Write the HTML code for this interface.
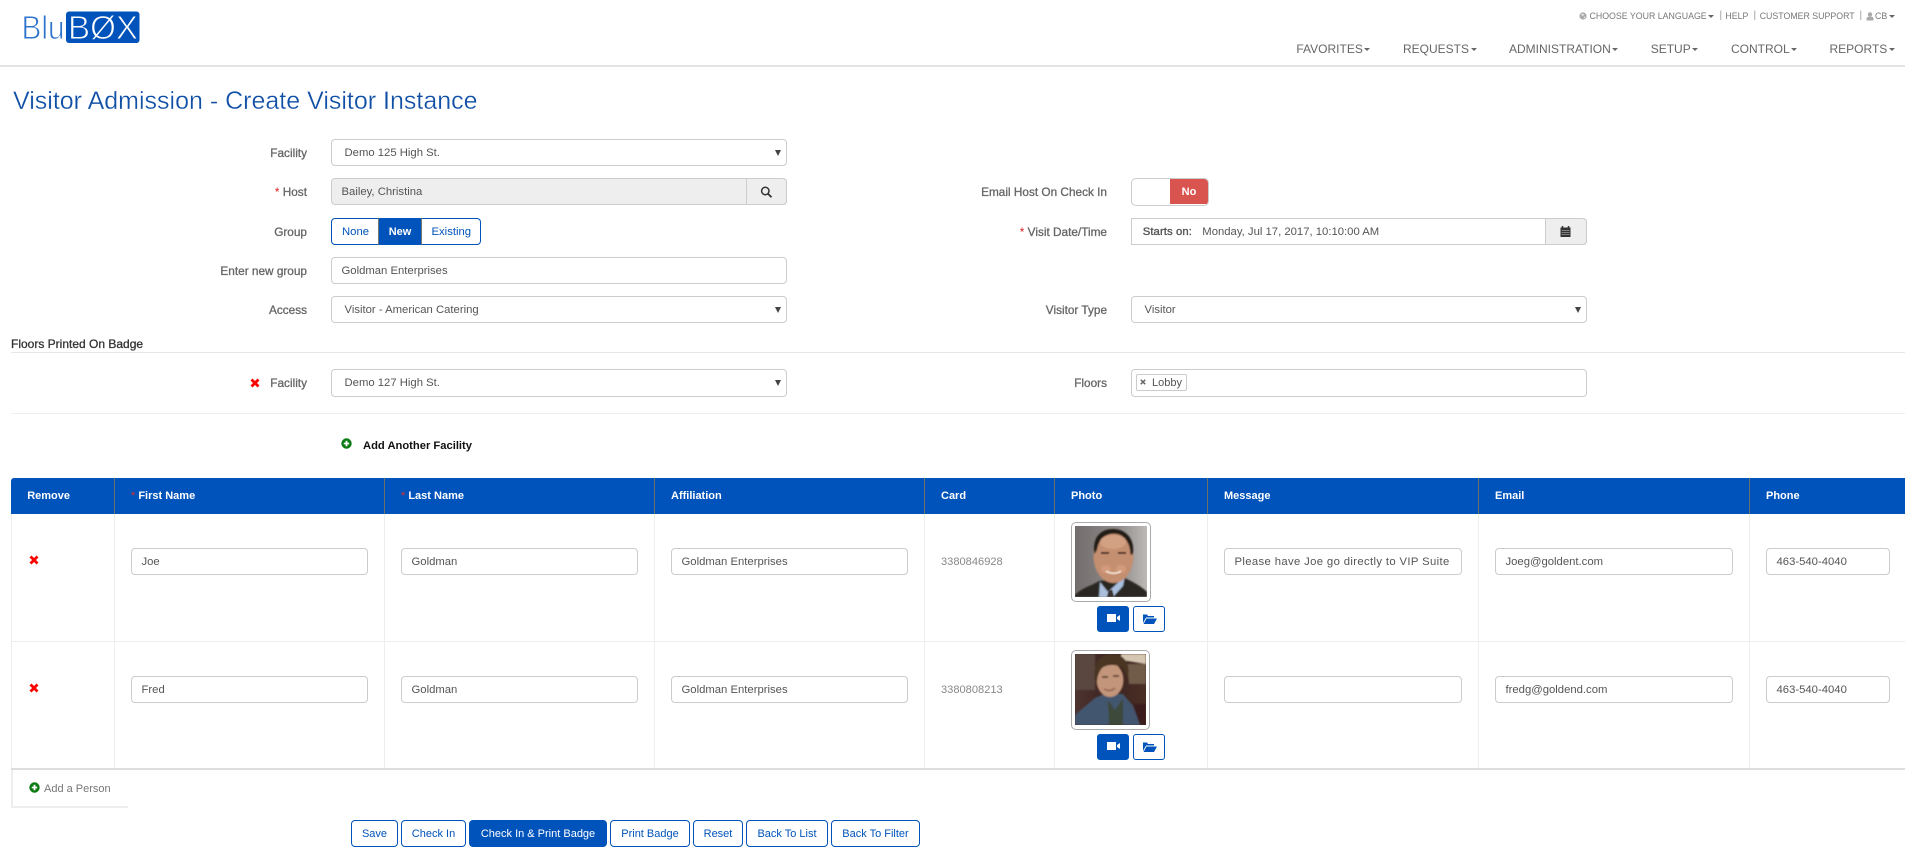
<!DOCTYPE html>
<html lang="en"><head><meta charset="utf-8"><title>Visitor Admission - Create Visitor Instance</title>
<style>
html,body{margin:0;padding:0;background:#fff;width:1905px;height:866px;overflow:hidden}
body{font-family:"Liberation Sans",Arial,sans-serif;font-size:12px;color:#555;position:relative}
.a{position:absolute;white-space:nowrap;box-sizing:border-box}
.lb{text-align:right;color:#666;font-size:11.8px;line-height:20px;-webkit-text-stroke:.3px #666}
.lb i{color:#e02020;font-style:normal;-webkit-text-stroke:0}
.in{border:1.5px solid #ccc;border-radius:4px;background:#fff;font-size:11.3px;line-height:26px;color:#555;padding-left:9.5px}
.sel{padding-left:12.5px}
.sel:after{content:"";position:absolute;right:5.5px;top:10px;border-left:3px solid transparent;border-right:3px solid transparent;border-top:6px solid #444}
.nav{font-size:12px;color:#666;line-height:16px;top:41px}
.nav b,.top b{display:inline-block;width:0;height:0;border-left:3px solid transparent;border-right:3px solid transparent;border-top:3px solid #666;vertical-align:middle;margin-left:1.5px}
.top{font-size:8.8px;color:#777;line-height:12px;top:10px}
.top.s{font-size:10px;color:#999}
.th{top:478px;height:36px;line-height:37px;color:#fff;font-weight:bold;font-size:11px}
.th i{color:#e0302a;font-style:normal;font-weight:normal}
.vh{top:478px;width:1px;height:36px;background:#6b6f6a}
.vb{top:514px;width:1px;height:254px;background:#eee}
.c{font-size:11.1px;color:#888;line-height:16px}
.btn{top:820px;height:27px;border:1px solid #0053ba;border-radius:4px;color:#0053ba;text-align:center;line-height:26px;font-size:11px;background:#fff}
.p{background:#0053ba;color:#fff}
.ib{width:32px;height:26px;border:1px solid #0053ba;border-radius:3px;background:#fff}
.ib.p{background:#0053ba}
.ib svg{position:absolute;left:8px;top:5px}
.ph{border:1px solid #aaa;border-radius:5px;background:#fff}
</style></head><body>

<!-- logo -->
<svg class="a" style="left:20px;top:8px" width="124" height="38" viewBox="0 0 124 38">
<rect x="46" y="3.500" width="73.500" height="31.500" rx="3" fill="#0053ba"/>
<text x="1.500" y="31" font-family="Liberation Sans" font-size="33" fill="#2e74cc" stroke="#fff" stroke-width=".9" textLength="43" lengthAdjust="spacingAndGlyphs">Blu</text>
<text x="48" y="31" font-family="Liberation Sans" font-size="33" fill="#fff" stroke="#0053ba" stroke-width=".9" textLength="70" lengthAdjust="spacingAndGlyphs">BØX</text>
</svg>

<!-- top links -->
<svg class="a" style="left:1579px;top:12px" width="8" height="8" viewBox="0 0 8 8"><circle cx="4" cy="4" r="3.600" fill="#aaa"/><path d="M2 2.500l2-1 1 1.500-1.500 1zM4.500 5l2-.5-1 2z" fill="#eee"/></svg>
<div class="a top" style="left:1589.500px">CHOOSE YOUR LANGUAGE<b></b></div>
<div class="a top s" style="left:1719.500px">|</div>
<div class="a top" style="left:1725.400px">HELP</div>
<div class="a top s" style="left:1753.500px">|</div>
<div class="a top" style="left:1759.700px">CUSTOMER SUPPORT</div>
<div class="a top s" style="left:1859.500px">|</div>
<svg class="a" style="left:1865.500px;top:12px" width="8" height="9" viewBox="0 0 8 9"><circle cx="4" cy="2.400" r="2.200" fill="#aaa"/><path d="M.5 8.500V6.600C.5 5.300 1.600 4.600 4 4.600s3.500.7 3.500 2v1.900z" fill="#aaa"/></svg>
<div class="a top" style="left:1875px">CB<b></b></div>

<!-- nav -->
<div class="a nav" style="left:1296.400px">FAVORITES<b></b></div>
<div class="a nav" style="left:1403px">REQUESTS<b></b></div>
<div class="a nav" style="left:1509px">ADMINISTRATION<b></b></div>
<div class="a nav" style="left:1650.700px">SETUP<b></b></div>
<div class="a nav" style="left:1731px">CONTROL<b></b></div>
<div class="a nav" style="left:1829.500px">REPORTS<b></b></div>
<div class="a" style="left:0;top:65px;width:1905px;height:2px;background:#e4e4e4"></div>

<div class="a" style="left:13px;top:86px;font-size:25px;line-height:30px;color:#0f4fa6;-webkit-text-stroke:.3px #fff">Visitor Admission - Create Visitor Instance</div>

<!-- left form -->
<div class="a lb" style="left:100px;width:207px;top:143px">Facility</div>
<div class="a in sel" style="left:331px;top:139px;width:456px;height:27px">Demo 125 High St.</div>

<div class="a lb" style="left:100px;width:207px;top:182px"><i>*</i> Host</div>
<div class="a in" style="left:331px;top:178px;width:456px;height:27px;background:#eee">Bailey, Christina</div>
<div class="a" style="left:746px;top:178px;width:41px;height:27px;border:1.500px solid #ccc;border-radius:0 4px 4px 0;background:#eee"></div>
<svg class="a" style="left:760px;top:186px" width="13" height="12" viewBox="0 0 13 12"><circle cx="5.300" cy="5" r="3.700" fill="none" stroke="#333" stroke-width="1.500"/><path d="M8 7.700l3.500 3.500" stroke="#333" stroke-width="1.800"/></svg>

<div class="a lb" style="left:100px;width:207px;top:222px">Group</div>
<div class="a" style="left:331px;top:218px;width:149.500px;height:27px;border:1px solid #0053ba;border-radius:4px;background:#fff"></div>
<div class="a" style="left:342px;top:219px;line-height:26px;font-size:11.300px;color:#0053ba">None</div>
<div class="a" style="left:378px;top:218px;width:44px;height:27px;background:#0053ba;color:#fff;font-weight:bold;font-size:11px;line-height:28px;text-align:center;border-left:1px solid #777;border-right:1px solid #777">New</div>
<div class="a" style="left:431.500px;top:219px;line-height:26px;font-size:11.300px;color:#0053ba">Existing</div>

<div class="a lb" style="left:100px;width:207px;top:261px">Enter new group</div>
<div class="a in" style="left:331px;top:257px;width:456px;height:27px">Goldman Enterprises</div>

<div class="a lb" style="left:100px;width:207px;top:300px">Access</div>
<div class="a in sel" style="left:331px;top:296px;width:456px;height:27px">Visitor - American Catering</div>

<!-- right form -->
<div class="a lb" style="left:900px;width:207px;top:182px">Email Host On Check In</div>
<div class="a" style="left:1131px;top:178px;width:78px;height:28px;border:1.500px solid #ccc;border-radius:5px;background:#fff;overflow:hidden"><div class="a" style="left:37.500px;top:0;width:39px;height:25px;background:#d9534f;color:#fff;font-weight:bold;font-size:11px;line-height:27px;text-align:center">No</div></div>

<div class="a lb" style="left:900px;width:207px;top:222px"><i>*</i> Visit Date/Time</div>
<div class="a in" style="left:1131px;top:218px;width:456px;height:27px;border-radius:0 4px 4px 0"></div>
<div class="a" style="left:1142.700px;top:219px;line-height:26px;font-size:11.300px;color:#555;-webkit-text-stroke:.35px #555;letter-spacing:.1px">Starts on:</div>
<div class="a" style="left:1202.300px;top:219px;line-height:26px;font-size:11.300px;color:#555">Monday, Jul 17, 2017, 10:10:00 AM</div>
<div class="a" style="left:1545px;top:218px;width:42px;height:27px;border:1.500px solid #ccc;border-radius:0 4px 4px 0;background:#eee"></div>
<svg class="a" style="left:1560px;top:226px" width="11" height="11" viewBox="0 0 11 11"><path d="M.5 1.500h10v9.500H.5z" fill="#333"/><path d="M2.500 0v3M8.500 0v3" stroke="#333" stroke-width="1.500"/><path d="M1.500 4.500h8M1.500 6.500h8M1.500 8.500h8" stroke="#999" stroke-width=".7"/></svg>

<div class="a lb" style="left:900px;width:207px;top:300px">Visitor Type</div>
<div class="a in sel" style="left:1131px;top:296px;width:456px;height:27px">Visitor</div>

<!-- floors -->
<div class="a" style="left:11px;top:336px;font-size:12px;line-height:16px;color:#333;-webkit-text-stroke:.3px #333">Floors Printed On Badge</div>
<div class="a" style="left:11px;top:352px;width:1894px;height:1px;background:#e6e6e6"></div>
<svg class="a" style="left:250px;top:378px" width="10" height="10" viewBox="0 0 10 10"><path d="M1.500 1.500l7 7M8.500 1.500l-7 7" stroke="#f00" stroke-width="2.800"/></svg>
<div class="a lb" style="left:100px;width:207px;top:373px">Facility</div>
<div class="a in sel" style="left:331px;top:369px;width:456px;height:28px;line-height:27px">Demo 127 High St.</div>
<div class="a lb" style="left:900px;width:207px;top:373px">Floors</div>
<div class="a in" style="left:1131px;top:369px;width:456px;height:28px"></div>
<div class="a" style="left:1136px;top:374px;width:50.500px;height:17px;border:1px solid #ccc;border-radius:2px;background:#fff;font-size:11px;line-height:16px;color:#555;padding-left:15px">Lobby</div>
<svg class="a" style="left:1140px;top:379px" width="6" height="6" viewBox="0 0 6 6"><path d="M.8.800l4.400 4.400M5.200.800L.8 5.200" stroke="#666" stroke-width="1.500"/></svg>
<div class="a" style="left:11px;top:413px;width:1894px;height:1px;background:#eee"></div>

<svg class="a" style="left:341px;top:438px" width="11" height="11" viewBox="0 0 11 11"><circle cx="5.500" cy="5.500" r="5.200" fill="#0a7a12"/><path d="M5.500 2.800v5.400M2.800 5.500h5.400" stroke="#fff" stroke-width="1.800"/></svg>
<div class="a" style="left:363px;top:438px;font-size:11.200px;font-weight:bold;line-height:16px;color:#111">Add Another Facility</div>

<!-- table header -->
<div class="a" style="left:11px;top:478px;width:1894px;height:36px;background:#0053ba;border-radius:3px 0 0 0"></div>
<div class="a vh" style="left:114px"></div><div class="a vh" style="left:384px"></div><div class="a vh" style="left:654px"></div><div class="a vh" style="left:924px"></div><div class="a vh" style="left:1054px"></div><div class="a vh" style="left:1207px"></div><div class="a vh" style="left:1478px"></div><div class="a vh" style="left:1749px"></div>
<div class="a th" style="left:27.200px">Remove</div>
<div class="a th" style="left:131px"><i>*</i> First Name</div>
<div class="a th" style="left:401px"><i>*</i> Last Name</div>
<div class="a th" style="left:671px">Affiliation</div>
<div class="a th" style="left:941px">Card</div>
<div class="a th" style="left:1071px">Photo</div>
<div class="a th" style="left:1224px">Message</div>
<div class="a th" style="left:1495px">Email</div>
<div class="a th" style="left:1766px">Phone</div>

<!-- table body lines -->
<div class="a" style="left:11px;top:514px;width:1px;height:254px;background:#eee"></div>
<div class="a vb" style="left:114px"></div><div class="a vb" style="left:384px"></div><div class="a vb" style="left:654px"></div><div class="a vb" style="left:924px"></div><div class="a vb" style="left:1054px"></div><div class="a vb" style="left:1207px"></div><div class="a vb" style="left:1478px"></div><div class="a vb" style="left:1749px"></div>
<div class="a" style="left:11px;top:641px;width:1894px;height:1px;background:#eee"></div>
<div class="a" style="left:11px;top:768px;width:1894px;height:2px;background:#ddd"></div>

<!-- row 1 -->
<svg class="a" style="left:29px;top:555px" width="10" height="10" viewBox="0 0 10 10"><path d="M1.500 1.500l7 7M8.500 1.500l-7 7" stroke="#f00" stroke-width="2.800"/></svg>
<div class="a in" style="left:131px;top:548px;width:237px;height:27px">Joe</div>
<div class="a in" style="left:401px;top:548px;width:237px;height:27px">Goldman</div>
<div class="a in" style="left:671px;top:548px;width:237px;height:27px">Goldman Enterprises</div>
<div class="a c" style="left:941px;top:554px">3380846928</div>
<div class="a ph" style="left:1071px;top:522px;width:80px;height:80px"></div>
<svg class="a" style="left:1075px;top:526px" width="72" height="71" viewBox="0 0 72 71">
<defs>
<linearGradient id="g1" x1="0" y1="0" x2="1" y2="0"><stop offset="0" stop-color="#726d6c"/><stop offset=".6" stop-color="#8f8b8a"/><stop offset="1" stop-color="#bcb9b7"/></linearGradient>
<filter id="bl"><feGaussianBlur stdDeviation=".8"/></filter>
<filter id="bs"><feGaussianBlur stdDeviation=".5"/></filter>
</defs>
<rect width="72" height="71" fill="url(#g1)"/>
<g filter="url(#bl)">
<path d="M0 69C6 62 16 60 24 55L50 52C58 56 66 60 72 66V71H0z" fill="#2b2624"/>
<path d="M25 56L33 66 50 50 48 60 38 71H24z" fill="#a9bfdc"/>
<ellipse cx="38.500" cy="30" rx="20" ry="27" fill="#c48e70"/>
<path d="M19.500 28C17 12 25 3 38 3s22 10 20 25l-2.500 1C55.500 18 50 9.500 42 8 33 6.500 24 11 22 24z" fill="#241b17"/>
<ellipse cx="38" cy="16" rx="13" ry="7" fill="#d2a184"/>
<ellipse cx="31" cy="43" rx="5" ry="4" fill="#d39a7c"/><ellipse cx="46" cy="43" rx="5" ry="4" fill="#d39a7c"/>
</g>
<g filter="url(#bs)">
<path d="M26 27h8M43 27h8" stroke="#5a3a2c" stroke-width="1.800"/>
<path d="M31 45C35 48 42 48 46 45" stroke="#f0ddd0" stroke-width="2" fill="none"/>
<path d="M32 71l2-7 3 0 2 7z" fill="#38332f"/>
</g></svg>
<div class="a ib p" style="left:1097px;top:606px"><svg width="15" height="13" viewBox="0 0 15 13"><path d="M1 2h9v8H1zM11 5l3-2v6l-3-2z" fill="#fff"/></svg></div>
<div class="a ib" style="left:1133px;top:606px"><svg width="16" height="13" viewBox="0 0 16 13"><path d="M1 2.500h4l1 1.500h6v1.500H4L1 11z" fill="#0053ba"/><path d="M4.500 6.500H15L12 12H1.500z" fill="#0053ba"/></svg></div>
<div class="a in" style="left:1224px;top:548px;width:238px;height:27px;letter-spacing:.36px">Please have Joe go directly to VIP Suite</div>
<div class="a in" style="left:1495px;top:548px;width:238px;height:27px">Joeg@goldent.com</div>
<div class="a in" style="left:1766px;top:548px;width:124px;height:27px">463-540-4040</div>

<!-- row 2 -->
<svg class="a" style="left:29px;top:683px" width="10" height="10" viewBox="0 0 10 10"><path d="M1.500 1.500l7 7M8.500 1.500l-7 7" stroke="#f00" stroke-width="2.800"/></svg>
<div class="a in" style="left:131px;top:676px;width:237px;height:27px">Fred</div>
<div class="a in" style="left:401px;top:676px;width:237px;height:27px">Goldman</div>
<div class="a in" style="left:671px;top:676px;width:237px;height:27px">Goldman Enterprises</div>
<div class="a c" style="left:941px;top:682px">3380808213</div>
<div class="a ph" style="left:1071px;top:650px;width:79px;height:80px"></div>
<svg class="a" style="left:1075px;top:654px" width="71" height="71" viewBox="0 0 71 71">
<defs><linearGradient id="g2" x1="0" y1="0" x2="1" y2="0"><stop offset="0" stop-color="#4e3430"/><stop offset=".5" stop-color="#3c2320"/><stop offset="1" stop-color="#4a2f26"/></linearGradient>
<filter id="bl2"><feGaussianBlur stdDeviation=".8"/></filter></defs>
<rect width="71" height="71" fill="url(#g2)"/>
<g filter="url(#bl2)">
<path d="M46 0H71V10L46 6z" fill="#d4c6b0"/>
<path d="M52 10H71V30H54z" fill="#6f5c48"/>
<path d="M0 0H20V36H0z" fill="#5a4740"/>
<path d="M58 50L71 50V71H64z" fill="#3a1f1a"/>
<path d="M0 61L20 44 29 40 48 40 58 52 65 71H0z" fill="#43566f"/>
<path d="M33 46L40 56 48 44 48 71H34z" fill="#3c4a3a"/>
<ellipse cx="35" cy="26" rx="13.500" ry="17" fill="#c3957a"/>
<path d="M20 28C17 8 26 0 37 0s19 8 16 24L48 14C42 10 32 10 27 14 24 18 22 22 22 30z" fill="#4a3420"/>
<path d="M27 23h6M38 22h6" stroke="#3c2a1c" stroke-width="1.500"/>
<path d="M29 35c4 2 8 2 11-1" stroke="#8e5a4a" stroke-width="1.500" fill="none"/>
</g></svg>
<div class="a ib p" style="left:1097px;top:734px"><svg width="15" height="13" viewBox="0 0 15 13"><path d="M1 2h9v8H1zM11 5l3-2v6l-3-2z" fill="#fff"/></svg></div>
<div class="a ib" style="left:1133px;top:734px"><svg width="16" height="13" viewBox="0 0 16 13"><path d="M1 2.500h4l1 1.500h6v1.500H4L1 11z" fill="#0053ba"/><path d="M4.500 6.500H15L12 12H1.500z" fill="#0053ba"/></svg></div>
<div class="a in" style="left:1224px;top:676px;width:238px;height:27px"></div>
<div class="a in" style="left:1495px;top:676px;width:238px;height:27px">fredg@goldend.com</div>
<div class="a in" style="left:1766px;top:676px;width:124px;height:27px">463-540-4040</div>

<!-- add a person -->
<div class="a" style="left:11px;top:770px;width:117px;height:38px;border-left:2px solid #eee;border-bottom:2px solid #eee"></div>
<svg class="a" style="left:29px;top:782px" width="11" height="11" viewBox="0 0 11 11"><circle cx="5.500" cy="5.500" r="5.200" fill="#0a7a12"/><path d="M5.500 2.800v5.400M2.800 5.500h5.400" stroke="#fff" stroke-width="1.800"/></svg>
<div class="a" style="left:44px;top:781px;font-size:11px;line-height:16px;color:#777">Add a Person</div>

<!-- bottom buttons -->
<div class="a btn" style="left:351px;width:47px">Save</div>
<div class="a btn" style="left:401px;width:65px">Check In</div>
<div class="a btn p" style="left:469px;width:138px">Check In &amp; Print Badge</div>
<div class="a btn" style="left:610px;width:80px">Print Badge</div>
<div class="a btn" style="left:693px;width:50px">Reset</div>
<div class="a btn" style="left:746px;width:82px">Back To List</div>
<div class="a btn" style="left:831px;width:89px">Back To Filter</div>
</body></html>
